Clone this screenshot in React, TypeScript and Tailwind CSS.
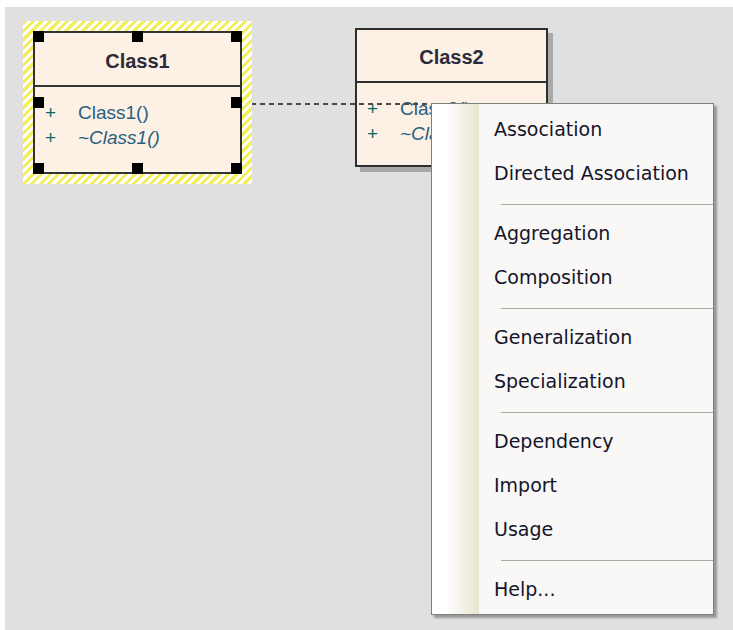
import React from 'react';

const menuItems: (string | null)[] = [
  'Association',
  'Directed Association',
  null,
  'Aggregation',
  'Composition',
  null,
  'Generalization',
  'Specialization',
  null,
  'Dependency',
  'Import',
  'Usage',
  null,
  'Help...',
];

const handle = 'w-[11px] h-[11px] bg-black';

function Operations({ lines }: { lines: { text: string; italic?: boolean }[] }) {
  return (
    <div className="pt-[13px] pl-[10px] text-[19px] leading-[25px] font-['Liberation_Sans',Arial,sans-serif]">
      {lines.map((l, i) => (
        <div key={i} className="flex">
          <span className="w-[33px] text-[#0b6a66]">+</span>
          <span className={`text-[#2a5f80] ${l.italic ? 'italic' : ''}`}>{l.text}</span>
        </div>
      ))}
    </div>
  );
}

export default function App() {
  return (
    <div className="w-[733px] h-[630px] bg-white pl-[5px] pt-[7px] overflow-hidden">
      <div className="relative w-full h-full bg-[#e0e0e0]">
        {/* Class2 */}
        <div className="absolute left-[350px] top-[21px] w-[193px] h-[139px] border-2 border-[#2e2e2e] bg-[#fcf1e4] shadow-[5px_5px_0_0_#a9a9a9]">
          <div className="h-[53px] border-b-2 border-[#2e2e2e] flex items-center justify-center pt-[3px] font-['Liberation_Sans',Arial,sans-serif] font-bold text-[20px] text-[#2b2b3a]">
            Class2
          </div>
          <Operations lines={[{ text: 'Class2()' }, { text: '~Class2()', italic: true }]} />
        </div>

        {/* connector */}
        <svg className="absolute left-[237px] top-[95px]" width="200" height="4">
          <line x1="0" y1="2" x2="200" y2="2" stroke="#4a4a4a" strokeWidth="2" strokeDasharray="5 4" />
        </svg>

        {/* Class1 selected */}
        <div className="absolute left-[18px] top-[14px] p-[10px] bg-[repeating-linear-gradient(135deg,#f4ee5c_0px,#f4ee5c_3px,#ffffff_3px,#ffffff_6px)]">
          <div className="w-[209px] h-[143px] border-2 border-[#333333] bg-[#fcf1e4]">
            <div className="h-[54px] border-b-2 border-[#333333] flex items-center justify-center pt-[4px] font-['Liberation_Sans',Arial,sans-serif] font-bold text-[20px] text-[#2b2b3a]">
              Class1
            </div>
            <Operations lines={[{ text: 'Class1()' }, { text: '~Class1()', italic: true }]} />
          </div>
          <div className="absolute inset-[10px] flex flex-col justify-between">
            <div className="flex justify-between">
              <div className={handle} />
              <div className={handle} />
              <div className={handle} />
            </div>
            <div className="flex justify-between">
              <div className={handle} />
              <div className={handle} />
            </div>
            <div className="flex justify-between">
              <div className={handle} />
              <div className={handle} />
              <div className={handle} />
            </div>
          </div>
        </div>

        {/* context menu */}
        <div className="absolute left-[426px] top-[96px] w-[283px] h-[512px] border border-[#7f7f7b] bg-[#f9f8f6] shadow-[3px_3px_2px_rgba(0,0,0,0.32)] flex">
          <div className="w-[47px] h-full bg-[linear-gradient(90deg,#ffffff_0%,#ffffff_30%,#e8e4d0_100%)]" />
          <div className="flex-1 pt-[3px] font-['DejaVu_Sans',Verdana,sans-serif] text-[19px] text-[#15152a]">
            {menuItems.map((item, i) =>
              item === null ? (
                <div key={i} className="h-[16px] pt-[9px] pl-[22px]">
                  <div className="border-t border-[#aaa99e]" />
                </div>
              ) : (
                <div key={i} className="h-[44px] flex items-center pl-[15px]">
                  {item}
                </div>
              )
            )}
          </div>
        </div>
      </div>
    </div>
  );
}
